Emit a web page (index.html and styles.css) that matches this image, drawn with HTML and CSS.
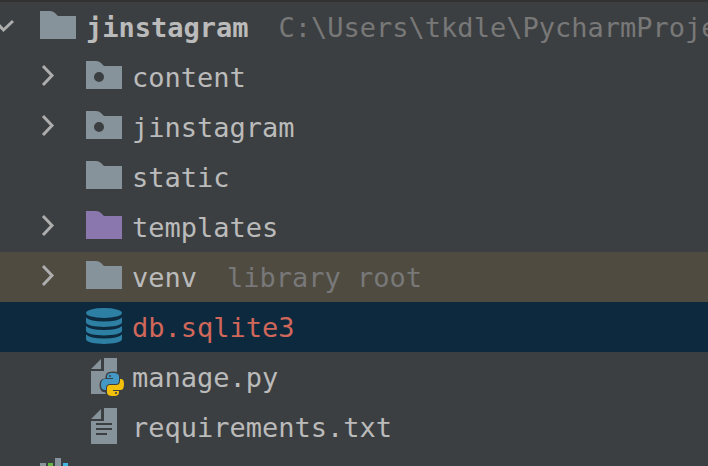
FILE: index.html
```html
<!DOCTYPE html>
<html lang="en">
<head>
<meta charset="utf-8">
<title>Project</title>
<link rel="stylesheet" href="styles.css">
</head>
<body>
<svg class="defs" aria-hidden="true">
  <symbol id="folder" viewBox="0 0 40 40"><path d="M2 4H12Q15 4 17 6L20 9H38V32H2Z"/></symbol>
  <symbol id="package" viewBox="0 0 40 40"><path fill-rule="evenodd" d="M2 4H12Q15 4 17 6L20 9H38V32H2ZM15 15A5 5 0 1 0 15 25A5 5 0 1 0 15 15Z"/></symbol>
  <symbol id="right" viewBox="0 0 20 40"><path class="stroke" d="M3 9L12 18.500L3 28"/></symbol>
  <symbol id="down" viewBox="0 0 20 40"><path class="stroke" d="M1 14L9.500 23L19 14"/></symbol>
</svg>
<ul class="tree">
  <li class="row root">
    <svg class="arrow"><use href="#down"/></svg>
    <svg class="icon"><use href="#folder"/></svg>
    <span class="name">jinstagram</span>
    <span class="note">C:\Users\tkdle\PycharmProje</span>
  </li>
  <li class="row">
    <svg class="arrow"><use href="#right"/></svg>
    <svg class="icon"><use href="#package"/></svg>
    <span class="name">content</span>
  </li>
  <li class="row">
    <svg class="arrow"><use href="#right"/></svg>
    <svg class="icon"><use href="#package"/></svg>
    <span class="name">jinstagram</span>
  </li>
  <li class="row">
    <span class="arrow"></span>
    <svg class="icon"><use href="#folder"/></svg>
    <span class="name">static</span>
  </li>
  <li class="row">
    <svg class="arrow"><use href="#right"/></svg>
    <svg class="icon purple"><use href="#folder"/></svg>
    <span class="name">templates</span>
  </li>
  <li class="row library">
    <svg class="arrow"><use href="#right"/></svg>
    <svg class="icon"><use href="#folder"/></svg>
    <span class="name">venv</span>
    <span class="note">library root</span>
  </li>
  <li class="row selected">
    <span class="arrow"></span>
    <svg class="icon database" viewBox="0 0 40 40">
      <ellipse cx="20" cy="6" rx="18" ry="5"/>
      <path d="M2 10.500Q6 14.500 20 14.500T38 10.500V15C38 21.500 2 21.500 2 15ZM2 19Q6 23 20 23T38 19V23.500C38 30 2 30 2 23.500ZM2 27.500Q6 31.500 20 31.500T38 27.500V32C38 38.500 2 38.500 2 32Z"/>
    </svg>
    <span class="name">db.sqlite3</span>
  </li>
  <li class="row">
    <span class="arrow"></span>
    <svg class="icon" viewBox="0 0 40 40">
      <path d="M7 12L17 2V12ZM20 1H33V37H7V14H20Z"/>
      <g class="cutout">
        <path d="M29 16C23 16 23 18 23 22H29V23H21C18 23 17 25 17 28C17 32 19 34 22 34H23V31C23 28 25 27 27 27H32C34 27 35 26 35 24V20C35 17 33 16 29 16Z"/>
        <path d="M29 39C35 39 35 37 35 33H29V32H37C39 32 40 30 40 27C40 24 39 22 36 22H35V24C35 27 33 28 31 28H26C24 28 23 29 23 31V35C23 38 25 39 29 39Z"/>
      </g>
      <path class="py-blue" d="M29 16C23 16 23 18 23 21H29V22H21C18 22 17 25 17 28C17 32 19 33 22 33V31C22 28 24 27 26 27H32C34 27 35 26 35 24V20C35 17 33 16 29 16Z"/>
      <path class="py-yellow" d="M29 39C35 39 35 37 35 34H29V33H37C39 33 40 30 40 27C40 23 39 22 36 22V24C36 27 34 28 32 28H26C24 28 23 29 23 31V35C23 38 25 39 29 39Z"/>
      <circle class="hole" cx="26" cy="19" r="1"/>
      <circle class="hole" cx="32" cy="36" r="1"/>
    </svg>
    <span class="name">manage.py</span>
  </li>
  <li class="row">
    <span class="arrow"></span>
    <svg class="icon" viewBox="0 0 40 40">
      <path d="M7 12L17 2V12ZM20 1H33V37H7V14H20Z"/>
      <path class="hole" d="M12 16H28V18H12ZM12 21H28V23H12ZM12 26H23V28H12Z"/>
    </svg>
    <span class="name">requirements.txt</span>
  </li>
  <li class="row top-level">
    <span class="arrow"></span>
    <svg class="icon" viewBox="0 0 40 40">
      <path d="M2 6H8V37H2ZM17 1H23V37H17Z"/>
      <path class="bar-green" d="M10 6H15V37H10Z"/>
      <path class="bar-blue" d="M25 6H30V37H25Z"/>
    </svg>
    <span class="name">External Libraries</span>
  </li>
</ul>
</body>
</html>
```
FILE: styles.css
```css
* {
  box-sizing: border-box;
}

html,
body {
  height: 100%;
}

body {
  margin: 0;
  overflow: hidden;
  background: #3c3f41;
  color: #bbbbbb;
  font: 27px "DejaVu Sans Mono", monospace;
}

.defs {
  display: none;
}

.tree {
  height: 100%;
  margin: 0;
  padding: 0;
  overflow: hidden;
  list-style: none;
  border-top: 2px solid #323232;
}

.row {
  display: flex;
  align-items: center;
  height: 50px;
  padding-left: 40px;
  white-space: pre;
}

.root,
.top-level {
  padding-left: 0;
}

.root .arrow,
.top-level .arrow {
  margin-left: -6px;
}

.root .name {
  font-weight: bold;
}

.library {
  background: #4f4b41;
}

.selected {
  background: #0d293e;
  color: #d1675a;
}

.arrow {
  flex: none;
  width: 20px;
  height: 40px;
  margin-right: 24px;
}

.icon {
  flex: none;
  width: 40px;
  height: 40px;
  margin-right: 8px;
  fill: #87939a;
}

.name,
.note {
  padding-top: 2px;
  line-height: 48px;
}

.note {
  margin-left: 30px;
  color: #787878;
}

.stroke {
  fill: none;
  stroke: #adadad;
  stroke-width: 3px;
}

.purple {
  fill: #8977ad;
}

.database {
  fill: #2d7fa3;
}

.cutout {
  fill: #3c3f41;
  stroke: #3c3f41;
  stroke-width: 3px;
}

.hole {
  fill: #3c3f41;
}

.py-blue {
  fill: #4398c6;
}

.py-yellow {
  fill: #f2bf0a;
}

.bar-green {
  fill: #62b543;
}

.bar-blue {
  fill: #40b6e0;
}
```
